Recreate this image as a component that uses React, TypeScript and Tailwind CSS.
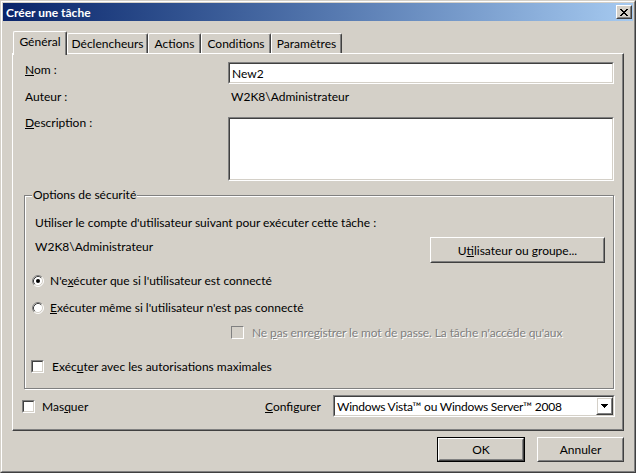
import React from "react";

function Sunken({ className = "", inner = "", children }: { className?: string; inner?: string; children?: React.ReactNode }) {
  return (
    <div className={`border border-t-[#808080] border-l-[#808080] border-r-white border-b-white ${className}`}>
      <div className={`h-full w-full border border-t-[#404040] border-l-[#404040] border-r-[#D4D0C8] border-b-[#D4D0C8] ${inner}`}>{children}</div>
    </div>
  );
}

function Raised({ className = "", inner = "", children }: { className?: string; inner?: string; children?: React.ReactNode }) {
  return (
    <div className={`border border-t-white border-l-white border-r-[#404040] border-b-[#404040] ${className}`}>
      <div className={`h-full w-full border border-t-[#D4D0C8] border-l-[#D4D0C8] border-r-[#808080] border-b-[#808080] flex items-center justify-center ${inner}`}>{children}</div>
    </div>
  );
}

function Radio({ checked }: { checked?: boolean }) {
  return (
    <svg width="12" height="12" viewBox="0 0 12 12" className="shrink-0">
      <circle cx="6" cy="6" r="5" fill="white" />
      <path d="M9.89 2.11 A5.5 5.5 0 0 0 2.11 9.89" stroke="#808080" fill="none" />
      <path d="M2.11 9.89 A5.5 5.5 0 0 0 9.89 2.11" stroke="#ffffff" fill="none" />
      <path d="M9.18 2.82 A4.5 4.5 0 0 0 2.82 9.18" stroke="#404040" fill="none" />
      <path d="M2.82 9.18 A4.5 4.5 0 0 0 9.18 2.82" stroke="#D4D0C8" fill="none" />
      {checked && <circle cx="6" cy="6" r="2" fill="black" />}
    </svg>
  );
}

function Check({ disabled }: { disabled?: boolean }) {
  if (disabled) {
    return <div className="w-[13px] h-[13px] shrink-0 border border-t-[#808080] border-l-[#808080] border-r-white border-b-white bg-[#D4D0C8]" />;
  }
  return <Sunken className="w-[13px] h-[13px] shrink-0" inner="bg-white" />;
}

function CloseGlyph() {
  const px: [number, number][] = [];
  const rows = ["XX....XX", ".XX..XX.", "..XXXX..", "...XX...", "..XXXX..", ".XX..XX.", "XX....XX"];
  rows.forEach((r, y) => r.split("").forEach((c, x) => { if (c === "X") px.push([x, y]); }));
  return (
    <svg width="8" height="7" viewBox="0 0 8 7" shapeRendering="crispEdges">
      {px.map(([x, y]) => <rect key={`${x}-${y}`} x={x} y={y} width="1" height="1" fill="black" />)}
    </svg>
  );
}

function Arrow() {
  return (
    <svg width="7" height="4" viewBox="0 0 7 4" shapeRendering="crispEdges">
      <rect x="0" y="0" width="7" height="1" fill="black" />
      <rect x="1" y="1" width="5" height="1" fill="black" />
      <rect x="2" y="2" width="3" height="1" fill="black" />
      <rect x="3" y="3" width="1" height="1" fill="black" />
    </svg>
  );
}

function Tab({ label, w, selected }: { label: string; w: string; selected?: boolean }) {
  if (selected) {
    return (
      <div className={`${w} h-[24px] -mb-[2px] relative z-10 bg-[#D4D0C8] border-t border-l border-r border-t-white border-l-white border-r-[#404040] rounded-t-[2px] shadow-[inset_-1px_0_0_#808080] pt-[2px] text-center`}>
        {label}
      </div>
    );
  }
  return (
    <div className={`${w} h-[20px] bg-[#D4D0C8] border-t border-l border-r border-t-white border-l-white border-r-[#404040] rounded-t-[2px] shadow-[inset_-1px_0_0_#808080] pt-[2px] text-center`}>
      {label}
    </div>
  );
}

export default function App() {
  return (
    <div className="w-[636px] h-[473px] bg-[#D4D0C8] font-['Lato',sans-serif] text-[12px] leading-[15px] text-black border border-t-[#D4D0C8] border-l-[#D4D0C8] border-r-[#404040] border-b-[#404040]">
      <div className="h-full border border-t-white border-l-white border-r-[#808080] border-b-[#808080] p-px flex flex-col">
        {/* Title bar */}
        <div className="h-[18px] shrink-0 flex items-center justify-between bg-gradient-to-r from-[#0A246A] to-[#A6CAF0] pl-[3px] pr-[1px]">
          <span className="text-white font-bold">Créer une tâche</span>
          <Raised className="w-[16px] h-[14px]" inner="bg-[#D4D0C8]">
            <CloseGlyph />
          </Raised>
        </div>

        <div className="px-[9px] flex flex-col">
          {/* Tabs */}
          <div className="flex items-end mt-[10px] pl-[1px]">
            <Tab label="Général" w="w-[54px]" selected />
            <Tab label="Déclencheurs" w="w-[81px]" />
            <Tab label="Actions" w="w-[53px]" />
            <Tab label="Conditions" w="w-[70px]" />
            <Tab label="Paramètres" w="w-[71px]" />
          </div>

          {/* Panel */}
          <div className="h-[378px] border border-t-white border-l-white border-r-[#404040] border-b-[#404040] shadow-[inset_-1px_-1px_0_#808080] flex flex-col">
            {/* Nom */}
            <div className="flex mt-[8px]">
              <div className="w-[215px] pl-[12px]"><u>N</u>om :</div>
              <Sunken className="w-[386px] h-[22px]" inner="bg-white flex items-center px-[2px]">New2</Sunken>
            </div>
            {/* Auteur */}
            <div className="flex mt-[5px]">
              <div className="w-[218px] pl-[12px]">Auteur :</div>
              <div>W2K8\Administrateur</div>
            </div>
            {/* Description */}
            <div className="flex mt-[13px]">
              <div className="w-[215px] pl-[12px] -mt-[2px]"><u>D</u>escription :</div>
              <Sunken className="w-[386px] h-[64px]" inner="bg-white" />
            </div>

            {/* Group box */}
            <div className="mt-[14px] ml-[11px] w-[590px] h-[194px] border border-[#808080] shadow-[inset_1px_1px_0_white,1px_1px_0_white] flex flex-col">
              <span className="-mt-[9px] ml-[7px] px-[1px] w-fit bg-[#D4D0C8]">Options de sécurité</span>
              <div className="mt-[13px] ml-[10px]">Utiliser le compte d'utilisateur suivant pour exécuter cette tâche :</div>
              <div className="mt-[7px] flex justify-between pr-[8px] pl-[10px]">
                <div className="mt-[2px]">W2K8\Administrateur</div>
                <Raised className="w-[175px] h-[26px]">
                  <span>U<u>t</u>ilisateur ou groupe...</span>
                </Raised>
              </div>
              <div className="mt-[10px] ml-[7px] flex items-center gap-[6px] h-[15px]">
                <Radio checked />
                <span>N'e<u>x</u>écuter que si l'utilisateur est connecté</span>
              </div>
              <div className="mt-[12px] ml-[7px] flex items-center gap-[6px] h-[15px]">
                <Radio />
                <span><u>E</u>xécuter même si l'utilisateur n'est pas connecté</span>
              </div>
              <div className="mt-[10px] ml-[206px] flex items-center gap-[8px] h-[15px]">
                <Check disabled />
                <span className="w-[340px] whitespace-nowrap overflow-hidden tracking-[-0.11px] text-[#808080] [text-shadow:1px_1px_0_white]">
                  Ne <u>p</u>as enregistrer le mot de passe. La tâche n'accède qu'aux
                </span>
              </div>
              <div className="mt-[19px] ml-[6px] flex items-center gap-[8px] h-[15px]">
                <Check />
                <span>Exéc<u>u</u>ter avec les autorisations maximales</span>
              </div>
            </div>

            {/* Bottom row */}
            <div className="mt-[6px] flex items-center h-[22px]">
              <div className="w-[252px] pl-[9px] flex items-center gap-[7px]">
                <Check />
                <span>Mas<u>q</u>uer</span>
              </div>
              <span><u>C</u>onfigurer</span>
              <Sunken className="ml-auto mr-[8px] w-[282px] h-[22px]" inner="bg-white flex items-center">
                <span className="flex-1 pl-[2px] whitespace-nowrap tracking-[-0.25px]">Windows Vista™ ou Windows Server™ 2008</span>
                <Raised className="w-[17px] h-[18px]">
                  <Arrow />
                </Raised>
              </Sunken>
            </div>
          </div>

          {/* Buttons */}
          <div className="mt-[6px] flex justify-end gap-[12px]">
            <div className="w-[88px] h-[25px] border border-black">
              <Raised className="h-full w-full">OK</Raised>
            </div>
            <Raised className="w-[87px] h-[25px]">Annuler</Raised>
          </div>
        </div>
      </div>
    </div>
  );
}
